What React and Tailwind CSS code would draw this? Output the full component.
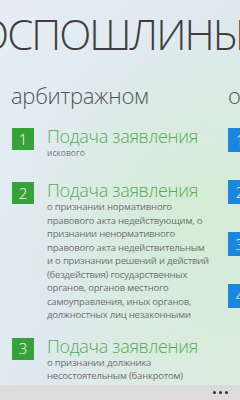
import React from "react";

const items = [
  { n: 1, title: "Подача заявления", text: ["искового"], small: true, gap: "mt-[18px]" },
  {
    n: 2,
    title: "Подача заявления",
    text: [
      "о признании нормативного",
      "правового акта недействующим, о",
      "признании ненормативного",
      "правового акта недействительным",
      "и о признании решений и действий",
      "(бездействия) государственных",
      "органов, органов местного",
      "самоуправления, иных органов,",
      "должностных лиц незаконными",
    ],
    gap: "mt-[21px]",
  },
  {
    n: 3,
    title: "Подача заявления",
    text: ["о признании должника", "несостоятельным (банкротом)"],
    gap: "mt-[14px]",
  },
];

function Item({ item }) {
  return (
    <div className={`flex ${item.gap}`}>
      <div className="w-[22px] h-[22px] mt-[2px] shrink-0 bg-[#37a23a] text-white text-[15px] font-light flex items-center justify-center">
        {item.n}
      </div>
      <div className="ml-[13px]">
        <div className="text-[18px] leading-[20px] font-light tracking-[-0.3px] text-[#52ad52] whitespace-nowrap">
          {item.title}
        </div>
        <div
          className={
            item.small
              ? "text-[8.5px] leading-[13px] text-[#777]"
              : "text-[9.5px] leading-[13.5px] tracking-[-0.2px] text-[#707070]"
          }
        >
          {item.text.map((t, i) => (
            <div key={i} className="whitespace-nowrap">{t}</div>
          ))}
        </div>
      </div>
    </div>
  );
}

export default function App() {
  return (
    <div
      className="w-[240px] h-[400px] overflow-hidden flex flex-col bg-[radial-gradient(ellipse_at_85%_55%,#d4ecd4_0%,rgba(220,236,226,0)_65%),linear-gradient(120deg,#e6edf4_0%,#dfe9ef_50%,#dcebdc_100%)]"
      style={{ fontFamily: '"Open Sans", "Noto Sans", sans-serif' }}
    >
      <div className="flex-1 overflow-hidden">
        <div className="ml-[-42px] mt-[10px] text-[42px] leading-[48px] font-light text-[#3e3e3e] whitespace-nowrap tracking-[-2px]">
          ГОСПОШЛИНЫ
        </div>
        <div className="flex mt-[24px]">
          <div className="w-[228px] shrink-0 pl-[12px]">
            <div className="text-[22px] leading-[26px] font-light tracking-[-0.3px] text-[#555] ml-[-1px]">
              арбитражном
            </div>
            {items.map((it) => (
              <Item key={it.n} item={it} />
            ))}
          </div>
          <div className="shrink-0">
            <div className="text-[22px] leading-[26px] font-light text-[#555]">о</div>
            <div className="flex flex-col gap-[28px] mt-[20px]">
              {[1, 2, 3, 4].map((n) => (
                <div
                  key={n}
                  className="w-[24px] h-[24px] bg-[#1a87dd] text-white text-[15px] font-light flex items-center justify-center"
                >
                  {n}
                </div>
              ))}
            </div>
          </div>
        </div>
      </div>
      <div className="h-[15px] shrink-0 bg-[#dcdcdc] flex items-center justify-end pr-[12px] gap-[3px]">
        <span className="w-[3px] h-[3px] rounded-full bg-[#333]" />
        <span className="w-[3px] h-[3px] rounded-full bg-[#333]" />
        <span className="w-[3px] h-[3px] rounded-full bg-[#333]" />
      </div>
    </div>
  );
}
